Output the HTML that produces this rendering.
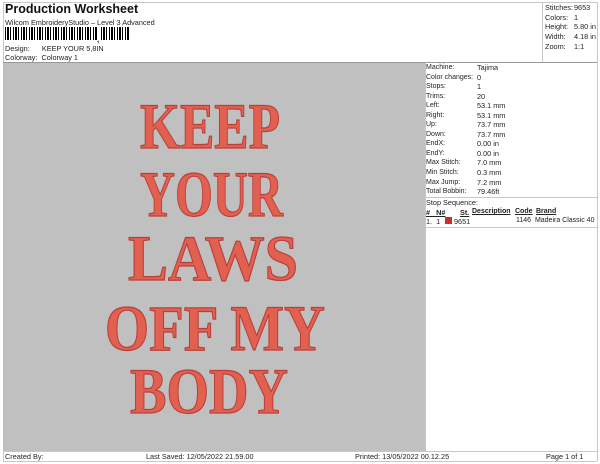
<!DOCTYPE html>
<html><head><style>
*{margin:0;padding:0;box-sizing:border-box}
body{width:600px;height:464px;background:#fff;font-family:"Liberation Sans",sans-serif;font-size:7.3px;color:#222;position:relative;overflow:hidden}
.a{position:absolute;white-space:nowrap}
.ln{position:absolute;background:#c8c8c8}
</style></head><body>
<div class="ln" style="left:3px;top:2px;width:594px;height:1px"></div>
<div class="ln" style="left:3px;top:2px;width:1px;height:459px"></div>
<div class="ln" style="left:597px;top:2px;width:1px;height:459px"></div>
<div class="ln" style="left:542px;top:2px;width:1px;height:60px"></div>
<div class="ln" style="left:3px;top:62px;width:594px;height:1px;background:#999"></div>
<div class="ln" style="left:3px;top:451px;width:594px;height:1px"></div>
<div class="ln" style="left:3px;top:461px;width:594px;height:1px"></div>
<div class="a" style="left:5px;top:2px;font-size:12.5px;font-weight:bold;color:#111">Production Worksheet</div>
<div class="a" style="left:5px;top:18px;font-size:7.3px">Wilcom EmbroideryStudio – Level 3 Advanced</div>
<div class="a" style="left:5px;top:27px;width:125px;height:13px;background:repeating-linear-gradient(90deg,#000 0 1px,#fff 1px 2px,#000 2px 4px,#fff 4px 5px,#000 5px 6px,#fff 6px 8px)"></div>
<div class="a" style="left:97px;top:27px;width:3px;height:16px;background:#fff"></div>
<div class="a" style="left:97px;top:35px;font-weight:bold;font-size:8px">,</div>
<div class="a" style="left:5px;top:44px">Design:&nbsp;&nbsp;&nbsp;&nbsp;&nbsp;&nbsp;KEEP YOUR 5,8IN</div>
<div class="a" style="left:5px;top:53px">Colorway:&nbsp;&nbsp;Colorway 1</div>
<div class="a" style="left:545px;top:3px;line-height:9.7px">Stitches:<br>Colors:<br>Height:<br>Width:<br>Zoom:</div>
<div class="a" style="left:574px;top:3px;line-height:9.7px">9653<br>1<br>5.80 in<br>4.18 in<br>1:1</div>
<div class="a" style="left:3px;top:63px;width:422px;height:388px;background:#c0c0c0"></div>
<div class="ln" style="left:425px;top:63px;width:1px;height:388px"></div>
<div class="a" style="left:426px;top:63px;line-height:9.55px;font-size:7px">Machine:<br>Color changes:<br>Stops:<br>Trims:<br>Left:<br>Right:<br>Up:<br>Down:<br>EndX:<br>EndY:<br>Max Stitch:<br>Min Stitch:<br>Max Jump:<br>Total Bobbin:</div>
<div class="a" style="left:477px;top:63px;line-height:9.55px">Tajima<br>0<br>1<br>20<br>53.1 mm<br>53.1 mm<br>73.7 mm<br>73.7 mm<br>0.00 in<br>0.00 in<br>7.0 mm<br>0.3 mm<br>7.2 mm<br>79.46ft</div>
<div class="ln" style="left:425px;top:197px;width:172px;height:1px"></div>
<div class="a" style="left:426px;top:198px">Stop Sequence:</div>
<div class="a" style="left:426px;top:208px;font-weight:bold;text-decoration:underline">#&nbsp;&nbsp;&nbsp;N#</div>
<div class="a" style="left:460px;top:208px;font-weight:bold;text-decoration:underline">St.</div>
<div class="a" style="left:472px;top:208px;font-weight:bold;text-decoration:underline;font-size:7px">Description</div>
<div class="a" style="left:515px;top:208px;font-weight:bold;text-decoration:underline;font-size:7px">Code</div>
<div class="a" style="left:536px;top:208px;font-weight:bold;text-decoration:underline;font-size:7px">Brand</div>
<div class="a" style="left:426px;top:217px">1.&nbsp;&nbsp;1</div>
<div class="a" style="left:445px;top:217px;width:7px;height:7px;background:#d42a2a"></div>
<div class="a" style="left:454px;top:217px">9651</div>
<div class="a" style="left:516px;top:217px;font-size:7px">1146&nbsp;&nbsp;Madeira Classic 40</div>
<div class="ln" style="left:425px;top:227px;width:172px;height:1px"></div>
<div class="a" style="left:5px;top:452px">Created By:</div>
<div class="a" style="left:146px;top:452px">Last Saved: 12/05/2022 21.59.00</div>
<div class="a" style="left:355px;top:452px">Printed: 13/05/2022 00.12.25</div>
<div class="a" style="left:546px;top:452px">Page 1 of 1</div>
<svg class="a" style="left:0;top:0" width="600" height="464">
<g font-family="Liberation Serif,serif" font-weight="bold" fill="#e2604f" stroke="#b8403a" stroke-width="1.2">
<text x="140" y="148" font-size="65" textLength="140" lengthAdjust="spacingAndGlyphs">KEEP</text>
<text x="140" y="216" font-size="65" textLength="143" lengthAdjust="spacingAndGlyphs">YOUR</text>
<text x="128" y="280" font-size="65" textLength="170" lengthAdjust="spacingAndGlyphs">LAWS</text>
<text x="105" y="350" font-size="65" textLength="220" lengthAdjust="spacingAndGlyphs">OFF MY</text>
<text x="130" y="413" font-size="65" textLength="158" lengthAdjust="spacingAndGlyphs">BODY</text>
</g></svg>
</body></html>
